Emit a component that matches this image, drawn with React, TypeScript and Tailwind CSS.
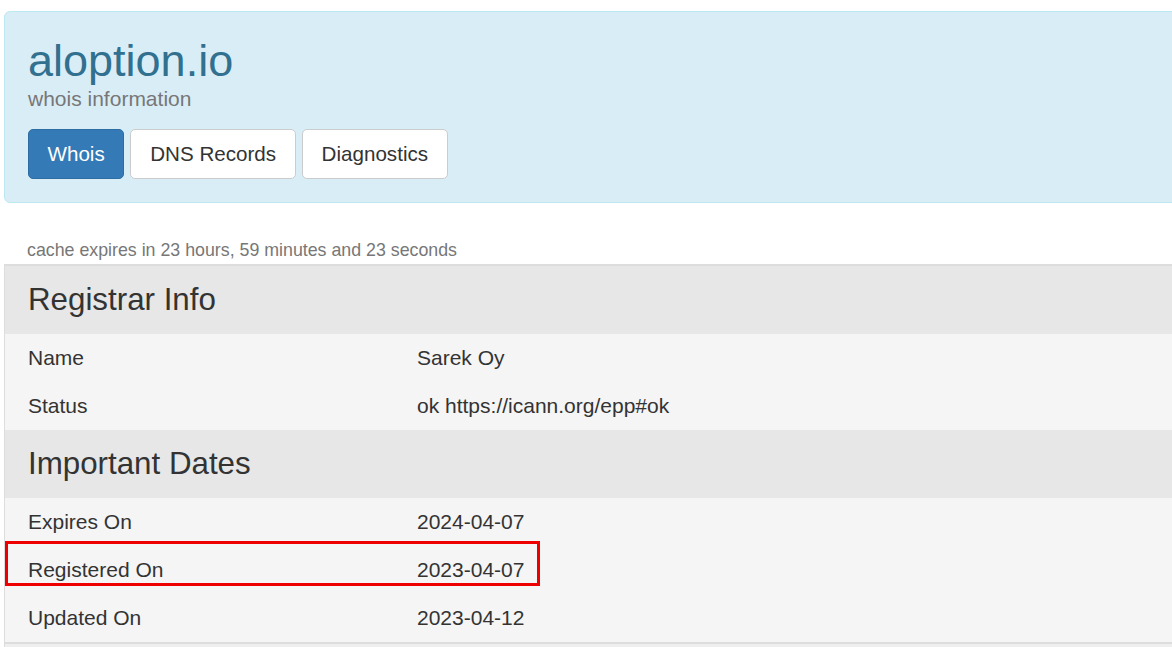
export default function App() {
  const registrar = [
    { label: 'Name', value: 'Sarek Oy' },
    { label: 'Status', value: 'ok https://icann.org/epp#ok' },
  ]
  const dates = [
    { label: 'Expires On', value: '2024-04-07' },
    { label: 'Registered On', value: '2023-04-07', marked: true },
    { label: 'Updated On', value: '2023-04-12' },
  ]

  return (
    <div className="w-[1172px] h-[647px] overflow-hidden bg-white font-['Liberation_Sans',Arial,sans-serif] text-[#333]">
      <div className="w-[1240px] pl-[4px] pt-[11px]">
        {/* Jumbotron */}
        <div className="rounded-[6px] border border-[#bce8f1] bg-[#d9edf7] pl-[23px] pt-[27px] pb-[23px]">
          <h1 className="text-[45px] leading-[44px] text-[#31708f]">aloption.io</h1>
          <p className="mt-[4px] text-[21px] leading-[24px] text-[#777]">whois information</p>
          <div className="mt-[18px] flex gap-[6px]">
            <button className="h-[50px] rounded-[5px] border border-[#2e6da4] bg-[#337ab7] px-[18.5px] text-[20.6px] text-white">
              Whois
            </button>
            <button className="h-[50px] rounded-[5px] border border-[#ccc] bg-white px-[19px] text-[20.6px] text-[#333]">
              DNS Records
            </button>
            <button className="h-[50px] rounded-[5px] border border-[#ccc] bg-white px-[18.5px] text-[20.6px] text-[#333]">
              Diagnostics
            </button>
          </div>
        </div>

        <p className="mt-[36px] pl-[23px] text-[17.8px] leading-[22px] text-[#777]">
          cache expires in 23 hours, 59 minutes and 23 seconds
        </p>

        {/* Table */}
        <div className="mt-[3px] border-t-2 border-l border-[#ddd]">
          <div className="flex h-[68px] items-center bg-[#e6e7e6] pl-[23px] text-[31.3px] text-[#333]">
            Registrar Info
          </div>
          {registrar.map((r, i) => (
            <div key={i} className="flex h-[48px] items-center bg-[#f5f5f5] text-[21px]">
              <div className="w-[412px] pl-[23px]">{r.label}</div>
              <div>{r.value}</div>
            </div>
          ))}
          <div className="flex h-[68px] items-center bg-[#e6e7e6] pl-[23px] text-[31.3px] text-[#333]">
            Important Dates
          </div>
          {dates.map((r, i) => (
            <div key={i} className="relative flex h-[48px] items-center bg-[#f5f5f5] text-[21px]">
              <div className="w-[412px] pl-[23px]">{r.label}</div>
              <div>{r.value}</div>
              {r.marked && (
                <div className="absolute left-0 top-[-5px] h-[45px] w-[535px] border-[3px] border-[#ee0000]" />
              )}
            </div>
          ))}
          <div className="h-[2px] bg-[#ddd]" />
          <div className="h-[10px] bg-[#eee]" />
        </div>
      </div>
    </div>
  )
}
